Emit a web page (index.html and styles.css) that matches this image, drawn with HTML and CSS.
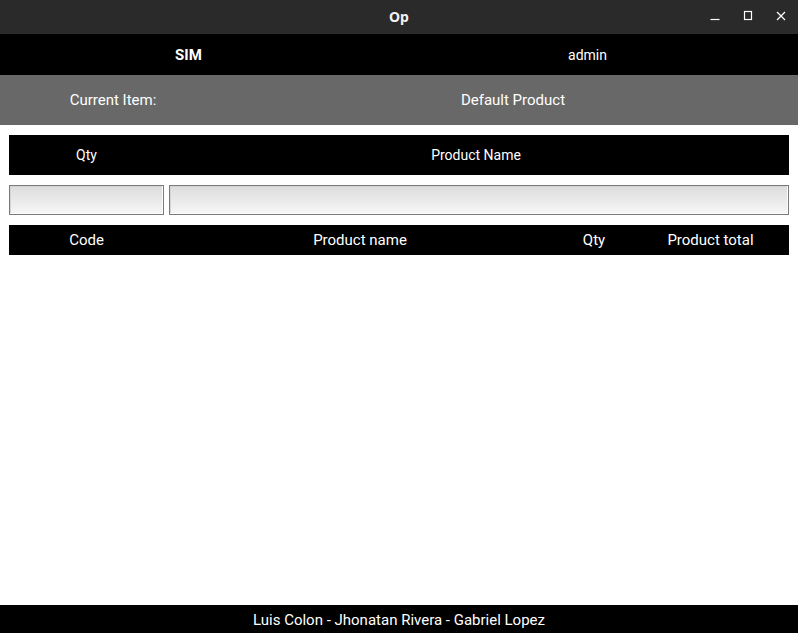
FILE: index.html
```html
<!DOCTYPE html>
<html>
<head>
<meta charset="utf-8">
<link rel="stylesheet" href="styles.css">
</head>
<body>
<div class="window">
  <div class="titlebar">
    <span class="title">Op</span>
    <div class="controls">
      <svg class="ctl" width="12" height="12" viewBox="0 0 12 12"><path d="M1.5 9.5h9" stroke="#fff" stroke-width="1.2"/></svg>
      <svg class="ctl" width="12" height="12" viewBox="0 0 12 12"><rect x="2.5" y="1.5" width="7" height="8" fill="none" stroke="#fff" stroke-width="1.2"/></svg>
      <svg class="ctl" width="12" height="12" viewBox="0 0 12 12"><path d="M2 2l8 8M10 2l-8 8" stroke="#fff" stroke-width="1.2"/></svg>
    </div>
  </div>
  <div class="header">
    <div class="hcell brand">SIM</div>
    <div class="hcell user">admin</div>
  </div>
  <div class="current">
    <div class="clabel">Current Item:</div>
    <div class="cvalue">Default Product</div>
  </div>
  <div class="content">
    <div class="formhead">
      <div class="fcol qty">Qty</div>
      <div class="fcol name">Product Name</div>
    </div>
    <div class="inputs">
      <input class="field qty" type="text">
      <input class="field name" type="text">
    </div>
    <div class="tablehead">
      <div class="th">Code</div>
      <div class="th">Product name</div>
      <div class="th">Qty</div>
      <div class="th">Product total</div>
    </div>
  </div>
  <div class="footer">Luis Colon - Jhonatan Rivera - Gabriel Lopez</div>
</div>
</body>
</html>
```
FILE: styles.css
```css
html, body {
  margin: 0;
  padding: 0;
  background: #fff;
}
.window {
  width: 798px;
  height: 633px;
  display: flex;
  flex-direction: column;
  font-family: Roboto, "Liberation Sans", sans-serif;
  color: #fff;
}
.titlebar {
  height: 34px;
  background: #2a2a2a;
  position: relative;
  display: flex;
  align-items: center;
  justify-content: center;
  padding-bottom: 2px;
  box-sizing: border-box;
}
.title {
  font-family: "Noto Sans", "DejaVu Sans", sans-serif;
  font-weight: bold;
  font-size: 14px;
  color: #f2f2f2;
}
.controls {
  position: absolute;
  right: 11px;
  top: 10px;
  display: flex;
  gap: 21px;
}
.ctl { display: block; }
.header {
  height: 41px;
  background: #000;
  display: flex;
  align-items: center;
}
.hcell {
  width: 399px;
  padding-right: 22px;
  box-sizing: border-box;
  text-align: center;
}
.brand {
  font-weight: bold;
  font-size: 15px;
}
.user {
  font-size: 14px;
}
.current {
  height: 50px;
  background: #686868;
  display: flex;
  align-items: center;
  font-size: 15px;
}
.clabel {
  width: 226px;
  text-align: center;
}
.cvalue {
  width: 572px;
  text-align: center;
  padding-left: 2px;
  box-sizing: border-box;
}
.content {
  flex: 1;
  padding: 10px 9px;
  display: flex;
  flex-direction: column;
  gap: 10px;
}
.formhead {
  height: 40px;
  background: #000;
  display: flex;
  align-items: center;
  gap: 5px;
  font-size: 14px;
}
.fcol { text-align: center; }
.qty { width: 155px; }
.name { flex: 1; }
.fcol.name { padding-right: 6px; }
.inputs {
  display: flex;
  gap: 5px;
  height: 30px;
}
.field {
  margin: 0;
  height: 30px;
  box-sizing: border-box;
  border: 1px solid #7a7a7a;
  box-shadow: inset -1px -1px 0 #fcfcfc, inset 1px 1px 0 #d4d4d4;
  background: linear-gradient(#dcdcdc, #f7f7f7);
  border-radius: 0;
  outline: none;
}
.field.qty { width: 155px; flex: none; }
.field.name { flex: 1; min-width: 0; }
.tablehead {
  height: 30px;
  background: #000;
  display: flex;
  align-items: center;
  font-size: 15px;
}
.th { text-align: center; }
.th:nth-child(1) { width: 155px; }
.th:nth-child(2) { width: 392px; }
.th:nth-child(3) { width: 76px; }
.th:nth-child(4) { width: 157px; }
.footer {
  height: 28px;
  background: #000;
  display: flex;
  align-items: center;
  justify-content: center;
  font-size: 15px;
  padding-top: 1px;
  box-sizing: border-box;
}
```
